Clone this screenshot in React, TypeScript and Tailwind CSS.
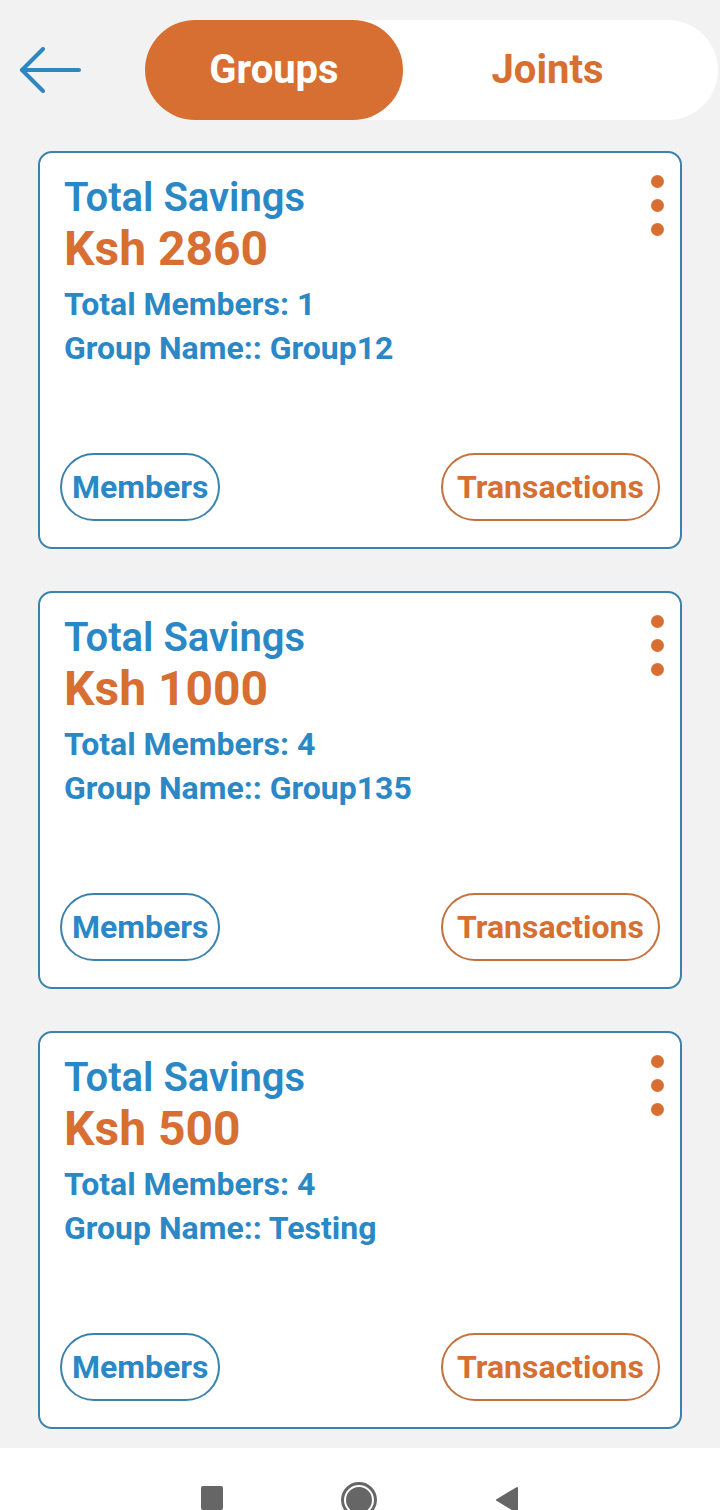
import React from 'react';

const GROUPS = [
  { total: 2860, members: 1, name: 'Group12' },
  { total: 1000, members: 4, name: 'Group135' },
  { total: 500, members: 4, name: 'Testing' },
];

const GroupCard = ({ total, members, name }: { total: number; members: number; name: string }) => (
  <div className="relative h-[398px] rounded-[14px] border-2 border-[#3b83ad] bg-white flex flex-col justify-between pl-[24px] pr-[20px] pt-[22px] pb-[26px]">
    {/* kebab */}
    <div className="absolute right-[16px] top-[22px] flex flex-col gap-[11px]">
      <span className="w-[13px] h-[13px] rounded-full bg-[#d86f32]" />
      <span className="w-[13px] h-[13px] rounded-full bg-[#d86f32]" />
      <span className="w-[13px] h-[13px] rounded-full bg-[#d86f32]" />
    </div>
    <div className="flex flex-col text-[#2b88c6] font-semibold">
      <span className="text-[40px] leading-[46px]">Total Savings</span>
      <span className="text-[48px] leading-[56px] font-bold text-[#d86f32]">Ksh {total}</span>
      <span className="text-[32px] leading-[40px] font-bold mt-[7px]">Total Members: {members}</span>
      <span className="text-[32px] leading-[40px] font-bold mt-[4px]">Group Name:: {name}</span>
    </div>
    <div className="flex items-center justify-between -ml-[4px]">
      <button className="h-[68px] px-[10px] rounded-full border-2 border-[#3b83ad] text-[32px] font-bold text-[#2b88c6]">
        Members
      </button>
      <button className="h-[68px] px-[14px] rounded-full border-2 border-[#c8703b] text-[32px] font-bold text-[#d86f32]">
        Transactions
      </button>
    </div>
  </div>
);

export default function App() {
  return (
    <div className="w-[720px] h-[1510px] bg-[#f2f2f2] flex flex-col font-['Roboto',sans-serif] overflow-hidden">
      {/* header */}
      <div className="flex items-center pt-[20px] pl-[20px] pr-[2px]">
        <svg width="62" height="46" viewBox="0 0 62 46" fill="none" stroke="#2f87c0" strokeWidth="4" strokeLinecap="round" strokeLinejoin="round">
          <path d="M59 23H2" />
          <path d="M23 2L2 23l21 21" />
        </svg>
        <div className="ml-[63px] flex-1 h-[100px] rounded-[50px] bg-white flex items-center">
          <div className="w-[258px] h-full rounded-full bg-[#d86f32] flex items-center justify-center text-white text-[40px] font-bold">
            Groups
          </div>
          <div className="flex-1 flex items-center justify-center text-[#d86f32] text-[40px] font-bold pr-[26px]">
            Joints
          </div>
        </div>
      </div>

      {/* cards */}
      <div className="flex flex-col gap-[42px] mx-[38px] mt-[31px]">
        {GROUPS.map((g) => (
          <GroupCard key={g.name} {...g} />
        ))}
      </div>

      {/* android nav */}
      <div className="mt-auto h-[62px] bg-white flex items-end justify-center gap-[118px] overflow-hidden">
        <span className="w-[22px] h-[24px] rounded-[2px] bg-[#666]" />
        <span className="w-[36px] h-[36px] rounded-full border-[3px] border-[#666] flex items-center justify-center -mb-[8px]">
          <span className="w-[26px] h-[26px] rounded-full bg-[#666]" />
        </span>
        <svg width="24" height="26" viewBox="0 0 24 26" className="-mb-[2px]">
          <path d="M22 2 L2 14 L22 26 Z" fill="#666" strokeLinejoin="round" stroke="#666" strokeWidth="2" />
        </svg>
      </div>
    </div>
  );
}
